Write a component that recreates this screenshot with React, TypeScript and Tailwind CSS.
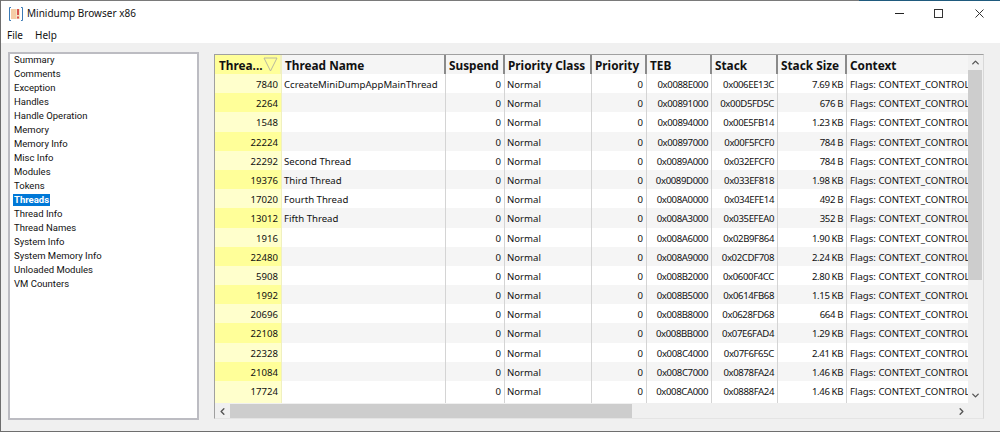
import { ChevronUp, ChevronDown, ChevronLeft, ChevronRight } from "lucide-react";

const NAV_ITEMS = [
  "Summary",
  "Comments",
  "Exception",
  "Handles",
  "Handle Operation",
  "Memory",
  "Memory Info",
  "Misc Info",
  "Modules",
  "Tokens",
  "Threads",
  "Thread Info",
  "Thread Names",
  "System Info",
  "System Memory Info",
  "Unloaded Modules",
  "VM Counters",
];

const ROWS = [
  ["7840", "CcreateMiniDumpAppMainThread", "0x0088E000", "0x006EE13C", "7.69 KB"],
  ["2264", "", "0x00891000", "0x00D5FD5C", "676 B"],
  ["1548", "", "0x00894000", "0x00E5FB14", "1.23 KB"],
  ["22224", "", "0x00897000", "0x00F5FCF0", "784 B"],
  ["22292", "Second Thread", "0x0089A000", "0x032EFCF0", "784 B"],
  ["19376", "Third Thread", "0x0089D000", "0x033EF818", "1.98 KB"],
  ["17020", "Fourth Thread", "0x008A0000", "0x034EFE14", "492 B"],
  ["13012", "Fifth Thread", "0x008A3000", "0x035EFEA0", "352 B"],
  ["1916", "", "0x008A6000", "0x02B9F864", "1.90 KB"],
  ["22480", "", "0x008A9000", "0x02CDF708", "2.24 KB"],
  ["5908", "", "0x008B2000", "0x0600F4CC", "2.80 KB"],
  ["1992", "", "0x008B5000", "0x0614FB68", "1.15 KB"],
  ["20696", "", "0x008B8000", "0x0628FD68", "664 B"],
  ["22108", "", "0x008BB000", "0x07E6FAD4", "1.29 KB"],
  ["22328", "", "0x008C4000", "0x07F6F65C", "2.41 KB"],
  ["21084", "", "0x008C7000", "0x0878FA24", "1.46 KB"],
  ["17724", "", "0x008CA000", "0x0888FA24", "1.46 KB"],
];

const HEADERS = [
  { label: "Threa...", w: "w-[67px]" },
  { label: "Thread Name", w: "w-[164px]" },
  { label: "Suspend", w: "w-[59px]" },
  { label: "Priority Class", w: "w-[87px]" },
  { label: "Priority", w: "w-[55px]" },
  { label: "TEB", w: "w-[65px]" },
  { label: "Stack", w: "w-[66px]" },
  { label: "Stack Size", w: "w-[69px]" },
  { label: "Context", w: "w-[123px]" },
];

const cell = "h-full shrink-0 border-r border-[#d4d4d4] pr-[3px] pl-[2px] pt-[1px] whitespace-nowrap leading-[19px]";
const hexCell = "tracking-[-0.04em] text-right";

const App = () => {
  return (
    <div
      className="w-[1000px] h-[432px] overflow-hidden bg-[#f0f0f0] text-[#111] flex flex-col border-l border-b border-[#6e6e6e]"
      style={{ fontFamily: '"Noto Sans", sans-serif' }}
    >
      {/* Window top edge */}
      <div className="h-px flex shrink-0">
        <div className="w-[858px] bg-[#7a7a7a]" />
        <div className="flex-1 bg-[#1f5a7d]" />
      </div>

      {/* Title bar */}
      <div className="h-[25px] bg-white flex items-center shrink-0">
        <svg width="16" height="16" viewBox="0 0 16 16" className="ml-[7px]">
          <path d="M3 1.5H1.5v13H3M13 1.5h1.5v13H13" fill="none" stroke="#3b7ab5" strokeWidth="1" />
          <rect x="3" y="3" width="5" height="10" fill="#f6cda6" />
          <rect x="8" y="3" width="4" height="10" fill="#f5e6c6" />
          <rect x="9" y="3" width="2" height="6" fill="#d9534f" />
          <rect x="9" y="10.5" width="2" height="2" fill="#d9534f" />
        </svg>
        <span className="ml-[3px] text-[10px]">Minidump Browser x86</span>
        <div className="ml-auto flex items-center h-full -mt-px">
          <svg width="9" height="9" viewBox="0 0 9 9" className="mr-[30px]">
            <path d="M0 4.5h9" stroke="#222" strokeWidth="1" />
          </svg>
          <svg width="9" height="9" viewBox="0 0 9 9" className="mr-[32px]">
            <rect x="0.5" y="0.5" width="8" height="8" fill="none" stroke="#333" strokeWidth="1" />
          </svg>
          <svg width="9" height="9" viewBox="0 0 9 9" className="mr-[16px]">
            <path d="M0.5 0.5l8 8M8.5 0.5l-8 8" stroke="#333" strokeWidth="1" />
          </svg>
        </div>
      </div>

      {/* Menu bar */}
      <div className="h-[17px] bg-white flex items-start gap-[12px] pl-[6px] text-[10px] leading-[19px] shrink-0">
        <span>File</span>
        <span>Help</span>
      </div>

      <div className="flex flex-1 min-h-0 pt-[9px] pl-[7px]">
        {/* Sidebar list */}
        <div
          className="w-[191px] h-[368px] shrink-0 bg-white border-2 border-[#bcbcc2] pl-[3px] text-[9.5px] leading-[12px]"
          style={{ fontFamily: "Roboto, sans-serif" }}
        >
          {NAV_ITEMS.map((item) =>
            item === "Threads" ? (
              <div key={item} className="h-[14px]">
                <span className="inline-block bg-[#0078d7] text-white font-bold px-[1px]">{item}</span>
              </div>
            ) : (
              <div key={item} className="h-[14px] pl-[1px]">{item}</div>
            )
          )}
        </div>

        {/* Table */}
        <div className="ml-[15px] w-[770px] h-[365px] mt-[2px] shrink-0 border-l border-t border-[#a0a0a0] border-r border-r-[#d8d8d8] border-b border-b-[#e4e4e4] flex flex-col">
          <div className="flex flex-1 min-h-0">
            <div className="w-[753px] shrink-0 flex flex-col overflow-hidden">
              <div className="flex h-[19px] shrink-0 text-[11.8px] font-bold leading-[20px]">
                {HEADERS.map((h, i) => (
                  <div
                    key={h.label}
                    className={`${h.w} shrink-0 h-full relative whitespace-nowrap border-r-2 ${i === 0 ? "pl-[4px] bg-[#ffff99] border-[#f0f0c0]" : "pl-[3px] bg-[#f5f5f5] border-[#8a8a8a]"}`}
                  >
                    {h.label}
                    {i === 0 && (
                      <svg width="15" height="15" viewBox="0 0 15 15" className="absolute right-[2px] top-[2px]">
                        <path d="M1 1h13L7.5 14z" fill="none" stroke="#b8b8a0" strokeWidth="1" />
                      </svg>
                    )}
                  </div>
                ))}
              </div>
              {ROWS.map((r, i) => (
                <div
                  key={r[0]}
                  className={`flex shrink-0 text-[9.6px] ${i === 16 ? "h-[22px]" : "h-[19.2px]"} ${i % 2 ? "bg-[#f5f5f5]" : "bg-white"}`}
                >
                  <div className={`${cell} w-[67px] text-right border-[#f0f0c0] ${i % 2 ? "bg-[#ffff99]" : "bg-[#ffffcc]"}`}>{r[0]}</div>
                  <div className={`${cell} w-[164px]`}>{r[1]}</div>
                  <div className={`${cell} w-[59px] text-right`}>0</div>
                  <div className={`${cell} w-[87px]`}>Normal</div>
                  <div className={`${cell} w-[55px] text-right`}>0</div>
                  <div className={`${cell} w-[65px] ${hexCell}`}>{r[2]}</div>
                  <div className={`${cell} w-[66px] ${hexCell}`}>{r[3]}</div>
                  <div className={`${cell} w-[69px] ${hexCell}`}>{r[4]}</div>
                  <div className="h-full w-[123px] shrink-0 px-[3px] pt-[1px] leading-[19px] whitespace-nowrap">Flags: CONTEXT_CONTROL</div>
                </div>
              ))}
            </div>
            {/* Vertical scrollbar */}
            <div className="w-[14px] shrink-0 bg-[#f0f0f0] flex flex-col items-center">
              <div className="h-[15px] flex items-center"><ChevronUp size={11} strokeWidth={3} className="text-[#555]" /></div>
              <div className="w-full h-[210px] bg-[#cdcdcd]" />
              <div className="mt-auto h-[17px] flex items-center"><ChevronDown size={11} strokeWidth={3} className="text-[#555]" /></div>
            </div>
          </div>
          {/* Horizontal scrollbar */}
          <div className="h-[14px] shrink-0 bg-[#f0f0f0] flex items-center pr-[14px]">
            <div className="w-[15px] flex justify-center"><ChevronLeft size={11} strokeWidth={3} className="text-[#555]" /></div>
            <div className="w-[402px] h-full bg-[#cdcdcd]" />
            <div className="ml-auto w-[15px] flex justify-center"><ChevronRight size={11} strokeWidth={3} className="text-[#555]" /></div>
          </div>
        </div>
      </div>
    </div>
  );
};

export default App;
